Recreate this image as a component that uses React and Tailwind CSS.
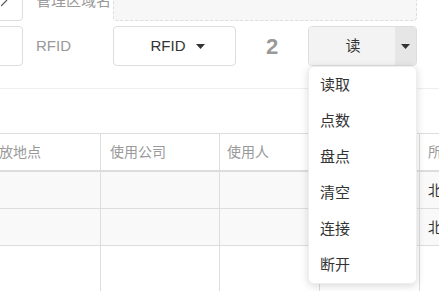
import React from 'react';

const menuItems = ['读取', '点数', '盘点', '清空', '连接', '断开'];

function Caret() {
  return (
    <svg width="9" height="5" viewBox="0 0 9 5" className="inline-block">
      <path d="M0 0 L9 0 L4.5 5 Z" fill="#333" />
    </svg>
  );
}

export default function App() {
  return (
    <div
      className="relative w-[439px] h-[291px] overflow-hidden bg-white text-[14px] text-[#333]"
      style={{ fontFamily: '"Liberation Sans", "Noto Sans CJK SC", sans-serif' }}
    >
      {/* 表单区 */}
      <div className="flex flex-col gap-[5px] -mt-[19px]">
        <div className="flex items-center h-[40px]">
          <div className="relative -ml-[37px] w-[60px] h-[40px] border border-[#ddd] rounded-[4px] bg-white shrink-0">
            <svg width="8" height="8" viewBox="0 0 8 8" className="absolute left-[37px] top-[17px]">
              <path d="M0 7 L6 1" stroke="#555" strokeWidth="1.2" />
            </svg>
          </div>
          <div className="w-[90px] pl-[13px] text-[#999] text-[15px] whitespace-nowrap">管理区域名</div>
          <div className="w-[304px] h-[40px] border border-dashed border-[#ddd] rounded-[4px] bg-[#f7f7f7] shrink-0" />
        </div>

        <div className="flex items-center h-[40px]">
          <div className="-ml-[37px] w-[60px] h-[40px] border border-[#ddd] rounded-[4px] bg-white shrink-0" />
          <div className="w-[90px] pl-[13px] text-[#999] text-[15px]">RFID</div>
          <button className="w-[123px] h-[40px] border border-[#ddd] rounded-[4px] bg-white flex items-center justify-center gap-[10px] pl-[6px] shrink-0">
            <span className="text-[#333] text-[15px]">RFID</span>
            <Caret />
          </button>
          <div className="w-[72px] flex justify-center text-[22px] font-bold text-[#999]">2</div>
          <div className="flex w-[109px] h-[40px] border border-[#ddd] rounded-[4px] overflow-hidden shrink-0">
            <div className="flex-1 bg-[#f3f3f3] flex items-center justify-center text-[15px] pl-[2px]">读</div>
            <div className="w-[21px] bg-[#e6e6e6] flex items-center justify-center">
              <Caret />
            </div>
          </div>
        </div>
      </div>

      <div className="mt-[22px] border-t border-[#eee]" />

      {/* 表格 */}
      <div className="mt-[44px] w-[520px] border-t border-[#ddd] text-[14px]">
        <div className="flex h-[38px] border-b-2 border-[#ddd] text-[#999]">
          <div className="w-[101px] flex items-center border-r border-[#ddd] whitespace-nowrap overflow-hidden">
            <span className="-ml-[1px]">放地点</span>
          </div>
          <div className="w-[119px] flex items-center pl-[9px] border-r border-[#ddd]">使用公司</div>
          <div className="w-[100px] flex items-center pl-[7px] border-r border-[#ddd]">使用人</div>
          <div className="w-[100px] border-r border-[#ddd]" />
          <div className="flex-1 flex items-center pl-[8px]">所属</div>
        </div>
        {[0, 1].map((i) => (
          <div key={i} className="flex h-[37px] bg-[#f9f9f9] border-b border-[#ddd] text-[#333]">
            <div className="w-[101px] border-r border-[#ddd]" />
            <div className="w-[119px] border-r border-[#ddd]" />
            <div className="w-[100px] border-r border-[#ddd]" />
            <div className="w-[100px] border-r border-[#ddd]" />
            <div className="flex-1 flex items-center pl-[8px]">北京</div>
          </div>
        ))}
        <div className="flex h-[50px]">
          <div className="w-[101px] border-r border-[#ddd]" />
          <div className="w-[119px] border-r border-[#ddd]" />
          <div className="w-[100px] border-r border-[#ddd]" />
          <div className="w-[100px] border-r border-[#ddd]" />
          <div className="flex-1" />
        </div>
      </div>

      {/* 下拉菜单 */}
      <div className="absolute left-[308px] top-[66px] w-[109px] bg-white rounded-[6px] border border-[#eee] shadow-[0_2px_8px_rgba(0,0,0,0.15)]">
        {menuItems.map((item) => (
          <div key={item} className="h-[36px] flex items-center px-[11px] text-[15px] text-[#333]">
            {item}
          </div>
        ))}
      </div>
    </div>
  );
}
